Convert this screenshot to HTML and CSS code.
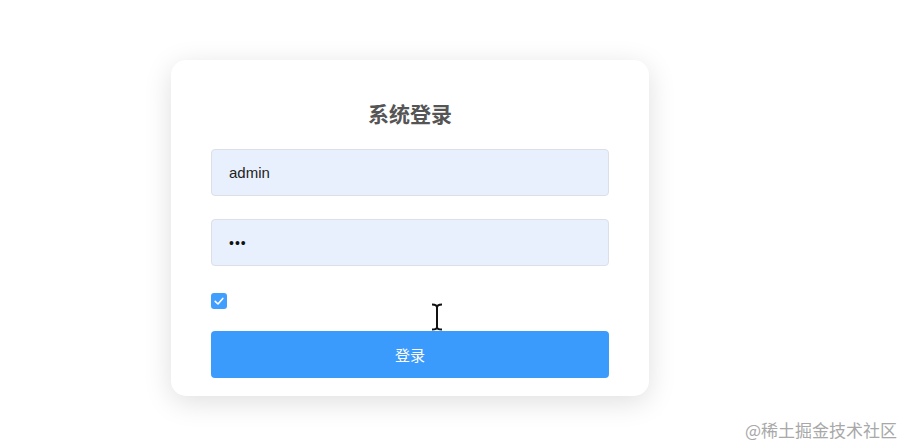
FILE: index.html
```html
<!DOCTYPE html>
<html lang="zh">
<head>
<meta charset="utf-8">
<title>系统登录</title>
<link rel="stylesheet" href="styles.css">
</head>
<body>
<div class="page">
  <form class="card">
    <h3 class="title">系统登录</h3>
    <input class="field" type="text" value="admin">
    <input class="field pwd" type="password" value="123">
    <label class="remember"><span class="box"><svg viewBox="0 0 16 16" width="16" height="16"><path d="M4.2 8.3 L7 11 L11.8 5.4" fill="none" stroke="#fff" stroke-width="1.6" stroke-linecap="round" stroke-linejoin="round"/></svg></span></label>
    <button class="btn" type="button">登录</button>
  </form>
</div>
<svg class="cursor" width="14" height="28" viewBox="0 0 14 28"><path d="M2 1.5 Q7 1.5 7 4.5 Q7 1.5 12 1.5 M7 4.5 V24 M2 26.5 Q7 26.5 7 24 Q7 26.5 12 26.5" fill="none" stroke="#111" stroke-width="2"/></svg>
<div class="watermark">@稀土掘金技术社区</div>
</body>
</html>
```
FILE: styles.css
```css
html, body {
  margin: 0;
  padding: 0;
  background: #fff;
  min-height: 100vh;
  font-family: "Noto Sans", "Noto Sans CJK SC", sans-serif;
}
.page {
  padding: 60px 0 0 171px;
}
.card {
  box-sizing: border-box;
  width: 478px;
  height: 336px;
  padding: 38px 40px 18px;
  background: #fff;
  border-radius: 15px;
  box-shadow: 0 6px 28px rgba(0, 0, 0, 0.13);
  display: flex;
  flex-direction: column;
}
.title {
  margin: 0 0 21px;
  text-align: center;
  font-size: 21px;
  line-height: 30px;
  font-weight: 700;
  color: #555;
  font-family: "Noto Sans CJK SC", sans-serif;
}
.field {
  box-sizing: border-box;
  height: 47px;
  width: 100%;
  border: 1px solid #dcdfe6;
  border-radius: 4px;
  background: #e8f0fe;
  padding: 0 17px;
  font-family: "Liberation Sans", Arial, sans-serif;
  font-size: 15px;
  color: #222;
  outline: none;
}
.pwd {
  margin-top: 23px;
  font-size: 14px;
  letter-spacing: 1px;
  color: #111;
}
.remember {
  margin-top: 27px;
  height: 16px;
  display: flex;
}
.box {
  width: 16px;
  height: 16px;
  border-radius: 3px;
  background: #409eff;
  display: block;
}
.box svg { display: block; }
.btn {
  margin-top: 22px;
  height: 47px;
  width: 100%;
  border: none;
  border-radius: 4px;
  background: #3b9bfd;
  color: #fff;
  font-size: 15px;
  font-family: "Noto Sans CJK SC", sans-serif;
}
.cursor {
  position: absolute;
  left: 430px;
  top: 303px;
}
.watermark {
  position: absolute;
  right: 10px;
  top: 417px;
  font-size: 17px;
  line-height: 26px;
  color: #a8a8a8;
  font-family: "Noto Sans CJK SC", sans-serif;
}
```
